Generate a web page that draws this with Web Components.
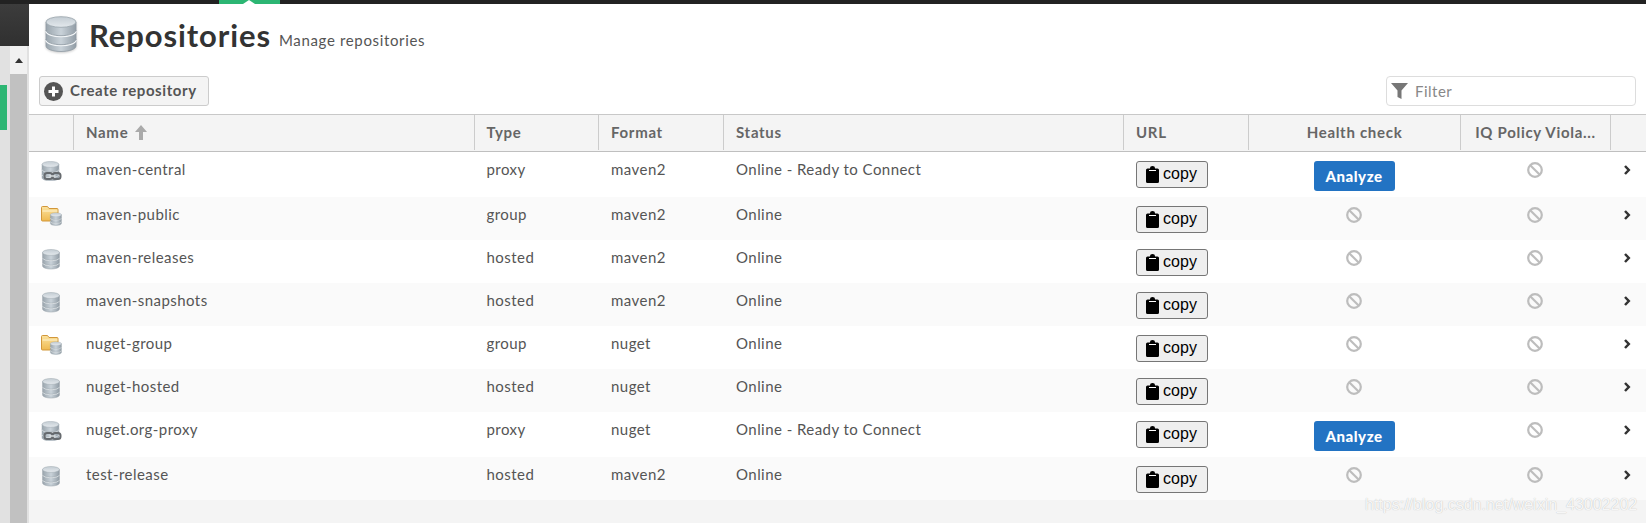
<!DOCTYPE html>
<html>
<head>
<meta charset="utf-8">
<title>Repositories</title>
<style>
  html, body { margin: 0; padding: 0; height: 523px; overflow: hidden; background: #fff; }
  body { font-family: "Lato", "Liberation Sans", sans-serif; color: #555; }
</style>
</head>
<body>
<nx-shell>
  <nx-page-header title="Repositories" subtitle="Manage repositories"></nx-page-header>
  <nx-toolbar></nx-toolbar>
  <repo-table>
    <repo-row name="maven-central" type="proxy" format="maven2" status="Online - Ready to Connect" analyze></repo-row>
    <repo-row name="maven-public" type="group" format="maven2" status="Online"></repo-row>
    <repo-row name="maven-releases" type="hosted" format="maven2" status="Online"></repo-row>
    <repo-row name="maven-snapshots" type="hosted" format="maven2" status="Online"></repo-row>
    <repo-row name="nuget-group" type="group" format="nuget" status="Online"></repo-row>
    <repo-row name="nuget-hosted" type="hosted" format="nuget" status="Online"></repo-row>
    <repo-row name="nuget.org-proxy" type="proxy" format="nuget" status="Online - Ready to Connect" analyze></repo-row>
    <repo-row name="test-release" type="hosted" format="maven2" status="Online"></repo-row>
  </repo-table>
</nx-shell>

<script>
const COLUMNS = "44px 400.5px 124.5px 125px 400px 125px 212px 150px 36px";

const DISK_DEFS = `
  <defs>
    <linearGradient id="body" x1="0" x2="1" y1="0" y2="0">
      <stop offset="0" stop-color="#9aa5ad"/><stop offset=".5" stop-color="#c9d2d9"/><stop offset="1" stop-color="#929da6"/>
    </linearGradient>
    <linearGradient id="top" x1="0" x2="0" y1="0" y2="1">
      <stop offset="0" stop-color="#c3ccd3"/><stop offset="1" stop-color="#e4e9ed"/>
    </linearGradient>
    <linearGradient id="folder" x1="0" x2="0" y1="0" y2="1">
      <stop offset="0" stop-color="#fbe3a0"/><stop offset="1" stop-color="#efb94f"/>
    </linearGradient>
  </defs>`;

const diskStack = `
  <path d="M1 6v24c0 3 7 5.500 15 5.500s15-2.500 15-5.500V6z" fill="url(#body)" stroke="#8f9aa3" stroke-width=".8"/>
  <path d="M1 15c0 3 7 5.500 15 5.500s15-2.500 15-5.500M1 24c0 3 7 5.500 15 5.500s15-2.500 15-5.500" fill="none" stroke="#f2f5f7" stroke-width="1.600"/>
  <path d="M1 14.200c0 3 7 5.500 15 5.500s15-2.500 15-5.500M1 23.200c0 3 7 5.500 15 5.500s15-2.500 15-5.500" fill="none" stroke="#8c979f" stroke-width=".8"/>
  <ellipse cx="16" cy="6" rx="15" ry="5.300" fill="url(#top)" stroke="#98a3ab" stroke-width=".8"/>`;

const ICONS = {
  hosted: `<svg width="18" height="21" viewBox="0 0 32 37" style="margin-left:1px">${DISK_DEFS}${diskStack}</svg>`,
  proxy: `<svg width="21" height="20" viewBox="0 0 21 20">${DISK_DEFS}
    <g transform="translate(.5 0) scale(.56)">${diskStack}</g>
    <g fill="none" stroke="#666a6e" stroke-width="2">
      <rect x="3.500" y="12" width="8" height="6" rx="2.500"/>
      <rect x="11.500" y="12" width="8" height="6" rx="2.500"/>
    </g>
    <path d="M8.500 15h6" stroke="#dfe2e4" stroke-width="1.400"/></svg>`,
  group: `<svg width="21" height="20" viewBox="0 0 21 20">${DISK_DEFS}
    <path d="M.5 1.500a1 1 0 0 1 1-1h5l1.500 2h8a1 1 0 0 1 1 1V15H1.500a1 1 0 0 1-1-1z" fill="url(#folder)" stroke="#d2973a"/>
    <path d="M1.500 5h15" stroke="#fff3cf"/>
    <g transform="translate(9 6.500) scale(.37)">${diskStack}</g></svg>`
};

const BAN = `<svg width="16" height="16" viewBox="0 0 16 16" fill="none" stroke="#bdbdbd" stroke-width="2.200">
  <circle cx="8" cy="8" r="6.800"/><path d="M3.200 3.200l9.600 9.600"/></svg>`;
const CHEVRON = `<svg width="7" height="10" viewBox="0 0 7 10" fill="none" stroke="#333" stroke-width="2.500"><path d="M1 1l3.800 4L1 9"/></svg>`;
const CLIP = `<svg width="13" height="17" viewBox="0 0 13 17"><path d="M1.500 2.500H4V2a2.500 2 0 0 1 5 0v.5h2.500A1.500 1.500 0 0 1 13 4v11.500a1.500 1.500 0 0 1-1.500 1.500h-10A1.500 1.500 0 0 1 0 15.500V4a1.500 1.500 0 0 1 1.500-1.500z" fill="#000"/><path d="M3 4.500h7" stroke="#fff" stroke-width="1"/></svg>`;

class NxShell extends HTMLElement {
  constructor() {
    super();
    this.attachShadow({ mode: "open" }).innerHTML = `
      <style>
        :host { display: flex; flex-direction: column; width: 1646px; height: 523px; overflow: hidden; position: relative; }
        .topbar { flex: 0 0 4px; background: #222; padding-left: 219px; display: flex; }
        .tab { width: 61px; background: #2cb673; position: relative; }
        .tab::after {
          content: ""; position: absolute; left: 24px; top: 0;
          border: 4px solid transparent; border-top: 0; border-bottom-color: #fff; border-left-width: 6px; border-right-width: 6px;
        }
        .body { flex: 1; display: flex; min-height: 0; }
        .side { flex: 0 0 29px; display: flex; flex-direction: column; background: #e1e1e1; }
        .side-head { flex: 0 0 42px; background: linear-gradient(#3c3c3c, #303030); }
        .side-rest { flex: 1; display: flex; }
        .nav { flex: 0 0 10px; padding-top: 39px; box-sizing: border-box; }
        .nav i { display: block; width: 7px; height: 45px; background: #2cb673; }
        .scroll { flex: 0 0 17px; display: flex; flex-direction: column; }
        .arrow { flex: 0 0 28px; background: #f1f1f1; display: flex; align-items: center; justify-content: center; }
        .arrow i { border: 4px solid transparent; border-top: 0; border-bottom: 5px solid #333; border-left-width: 4.5px; border-right-width: 4.5px; }
        .thumb { flex: 1; background: #c1c1c1; }
        main { flex: 1; display: flex; flex-direction: column; min-width: 0; background: #f4f4f4; }
        .mark {
          position: absolute; left: 1365px; top: 495px; white-space: nowrap;
          font: 400 16px/20px "Liberation Sans", sans-serif; color: rgba(255,255,255,.9);
          text-shadow: 0 0 1px rgba(0,0,0,.28);
        }
      </style>
      <div class="topbar"><div class="tab"></div></div>
      <div class="body">
        <div class="side">
          <div class="side-head"></div>
          <div class="side-rest">
            <div class="nav"><i></i></div>
            <div class="scroll"><div class="arrow"><i></i></div><div class="thumb"></div></div>
          </div>
        </div>
        <main><slot></slot></main>
      </div>
      <div class="mark">https://blog.csdn.net/weixin_43002202</div>`;
  }
}

class NxPageHeader extends HTMLElement {
  constructor() {
    super();
    this.attachShadow({ mode: "open" }).innerHTML = `
      <style>
        :host { display: flex; align-items: flex-start; height: 72px; box-sizing: border-box; padding: 12px 0 0 16px; background: #fff; }
        svg { flex: none; filter: drop-shadow(0 1px 1px rgba(0,0,0,.2)); }
        h1 { margin: 1px 0 0 12px; font: 700 31px/36px "Lato", sans-serif; color: #333; letter-spacing: .9px; }
        span { margin: 14px 0 0 8px; font: 400 15px/20px "Lato", sans-serif; color: #555; letter-spacing: .65px; }
      </style>
      <svg width="32" height="37" viewBox="0 0 32 37">${DISK_DEFS}${diskStack}</svg>
      <h1>${this.getAttribute("title")}</h1>
      <span>${this.getAttribute("subtitle")}</span>`;
  }
}

class NxToolbar extends HTMLElement {
  constructor() {
    super();
    this.attachShadow({ mode: "open" }).innerHTML = `
      <style>
        :host { display: flex; justify-content: space-between; align-items: flex-start; height: 38px; padding: 0 10px 0 10px; background: #fff; }
        button {
          display: flex; align-items: center; gap: 7px; width: 170px; height: 30px; padding: 0 0 2px 4px;
          background: #f4f4f4; border: 1px solid #ccc; border-radius: 3px;
          font: 700 15px "Lato", sans-serif; color: #555; letter-spacing: .6px;
        }
        button svg { margin-top: 2px; }
        .filter {
          display: flex; align-items: center; gap: 7px; width: 250px; height: 30px; box-sizing: border-box; padding: 0 0 1px 4px;
          border: 1px solid #ddd; border-radius: 4px; background: #fff;
          font: 400 15px "Lato", sans-serif; color: #888; letter-spacing: .5px;
        }
      </style>
      <button>
        <svg width="19" height="19" viewBox="0 0 19 19"><circle cx="9.500" cy="9.500" r="9.500" fill="#555"/><path d="M9.500 4.500v10M4.500 9.500h10" stroke="#fff" stroke-width="3"/></svg>
        Create repository
      </button>
      <div class="filter">
        <svg width="17" height="16" viewBox="0 0 17 16"><path d="M0 0h17l-6.500 7.500V16L6.500 14V7.500z" fill="#777"/></svg>
        <span>Filter</span>
      </div>`;
  }
}

class RepoTable extends HTMLElement {
  constructor() {
    super();
    this.attachShadow({ mode: "open" }).innerHTML = `
      <style>
        :host { display: block; font: 400 15px/20px "Lato", sans-serif; color: #555; letter-spacing: .45px; }
        .head {
          display: grid; grid-template-columns: ${COLUMNS}; height: 38px; box-sizing: border-box;
          background: #f4f4f4; border-top: 1px solid #c8c8c8; border-bottom: 1px solid #bfbfbf; padding-bottom: 1px;
          font-weight: 700; color: #666; letter-spacing: .7px;
        }
        .head > div { display: flex; align-items: center; gap: 7px; padding: 0 0 1px 12px; border-left: 1px solid #ccc; box-sizing: border-box; }
        .head > div:first-child { border-left: 0; }
        .head > .c { justify-content: center; padding-left: 0; }
      </style>
      <div class="head">
        <div></div>
        <div>Name <svg width="12" height="15" viewBox="0 0 12 15"><path d="M6 0l6 7H8v8H4V7H0z" fill="#aaa"/></svg></div>
        <div>Type</div><div>Format</div><div>Status</div><div>URL</div>
        <div class="c">Health check</div><div class="c">IQ Policy Viola...</div><div></div>
      </div>
      <slot></slot>`;
  }
}

class RepoRow extends HTMLElement {
  constructor() {
    super();
    const a = (n) => this.getAttribute(n);
    const analyze = this.hasAttribute("analyze");
    this.attachShadow({ mode: "open" }).innerHTML = `
      <style>
        :host { display: grid; grid-template-columns: ${COLUMNS}; background: #fff; padding-bottom: 6px; }
        :host(:nth-child(even)) { background: #fafafa; }
        div { padding: 7px 0 0 13px; box-sizing: border-box; }
        .icon { padding: 9px 0 0 12px; }
        .icon svg, .m svg { display: block; }
        .url { padding-top: 9px; }
        .c { padding: 9px 0 0; display: flex; justify-content: center; align-items: flex-start; }
        .m { padding-top: 10px; }
        .chev { padding: 13px 0 0 14px; }
        .chev svg { display: block; }
        .copy {
          display: flex; align-items: center; gap: 4px; width: 72px; height: 27px; margin-bottom: 1px; padding: 0 0 1px 9px; box-sizing: border-box;
          background: #efefef; border: 1px solid #767676; border-radius: 3px;
          font: 400 16px "Liberation Sans", sans-serif; color: #000; letter-spacing: .1px;
        }
        .analyze {
          width: 81px; height: 30px; padding: 0; border: 0; border-radius: 3px; background: #2273c3; color: #fff;
          font: 900 15px "Lato", sans-serif; letter-spacing: .55px;
        }
      </style>
      <div class="icon">${ICONS[a("type")]}</div>
      <div>${a("name")}</div>
      <div>${a("type")}</div>
      <div>${a("format")}</div>
      <div>${a("status")}</div>
      <div class="url"><button class="copy">${CLIP}copy</button></div>
      <div class="c ${analyze ? "" : "m"}">${analyze ? '<button class="analyze">Analyze</button>' : BAN}</div>
      <div class="c m">${BAN}</div>
      <div class="chev">${CHEVRON}</div>`;
  }
}

customElements.define("nx-shell", NxShell);
customElements.define("nx-page-header", NxPageHeader);
customElements.define("nx-toolbar", NxToolbar);
customElements.define("repo-table", RepoTable);
customElements.define("repo-row", RepoRow);
</script>
</body>
</html>
